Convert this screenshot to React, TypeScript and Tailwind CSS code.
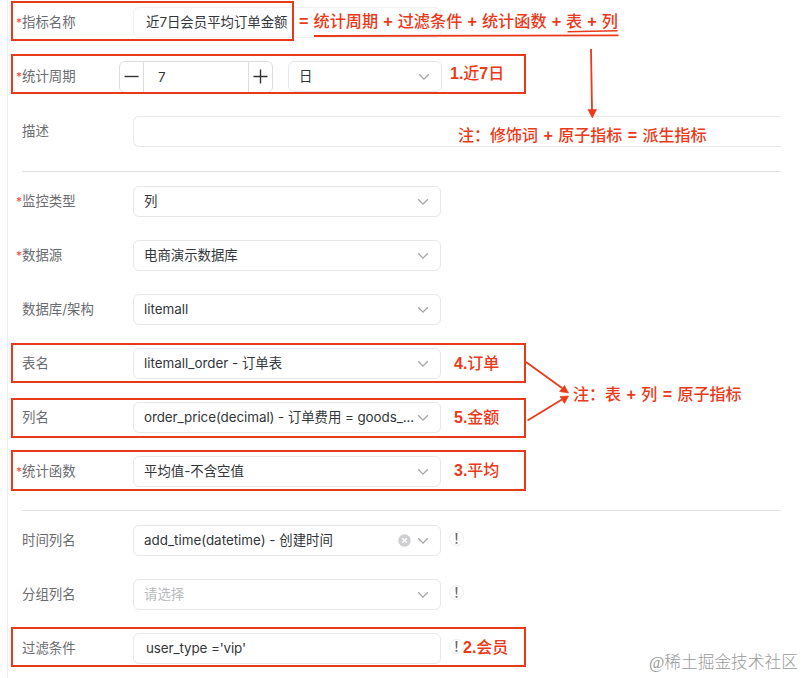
import type { ReactNode } from 'react';
import clsx from 'clsx';

interface RowProps {
  label: string;
  required?: boolean;
  mark?: string;
  className?: string;
  children: ReactNode;
}

function Row({ label, required, mark, className, children }: RowProps) {
  return (
    <div className={clsx('relative flex h-[31px] items-center', className)}>
      <div className="flex w-[117px] shrink-0 items-center text-[13.4px] text-[#6b6c6f]">
        <span className="w-[6px] shrink-0 text-[12px] leading-[14px] pt-[2px] text-[#f0483e]">{required ? '*' : ''}</span>
        <span className="whitespace-nowrap">{label}</span>
      </div>
      {children}
      {mark && <div className={clsx('absolute left-[-5px] border-2 border-[#e83a1a]', mark)} />}
    </div>
  );
}

function Chevron() {
  return (
    <svg width="12" height="8" viewBox="0 0 12 8" fill="none" className="shrink-0">
      <path d="M1.2 1.3 L6 6.1 L10.8 1.3" stroke="#a3a5a9" strokeWidth="1.3" />
    </svg>
  );
}

function ClearIcon() {
  return (
    <svg width="13" height="13" viewBox="0 0 13 13" className="mr-[6px] shrink-0">
      <circle cx="6.5" cy="6.5" r="6.2" fill="#cfcfd1" />
      <path d="M4.2 4.2 L8.8 8.8 M8.8 4.2 L4.2 8.8" stroke="#fff" strokeWidth="1.3" />
    </svg>
  );
}

interface SelectProps {
  value: string;
  placeholder?: boolean;
  clearable?: boolean;
  tracking?: string;
  className?: string;
}

function Select({ value, placeholder, clearable, tracking, className = 'w-[308px]' }: SelectProps) {
  return (
    <div
      className={clsx(
        'flex h-[31px] shrink-0 items-center rounded-[6px] border border-[#e6e7ea] pr-[11px] pl-[10px] text-[13.4px]',
        className,
      )}
    >
      <span
        className={clsx('flex-1 whitespace-nowrap', placeholder ? 'text-[#b9babd]' : 'text-[#33363b]', tracking)}
      >
        {value}
      </span>
      {clearable && <ClearIcon />}
      <Chevron />
    </div>
  );
}

function Hint() {
  return (
    <div className="mb-[4px] ml-[8px] flex size-[15px] items-center justify-center rounded-full border border-[#ededed]">
      <svg width="3" height="11" viewBox="0 0 3 11">
        <path d="M0.5 0 H2.5 L2.1 7.5 H0.9 Z" fill="#6c6c6c" />
        <rect x="0.6" y="9" width="1.8" height="1.8" fill="#6c6c6c" />
      </svg>
    </div>
  );
}

// digits and operators are bold, the Chinese text is medium
function Note({ text, className }: { text: string; className: string }) {
  return (
    <span
      className={clsx(
        "absolute font-['Liberation_Sans','Noto_Sans_CJK_SC',sans-serif] leading-[20px] font-medium whitespace-nowrap text-[#ea3a1a]",
        className,
      )}
    >
      {text.split(/([\d.+=]+)/).map((part, i) =>
        i % 2 ? (
          <span key={i} className="font-bold">
            {part}
          </span>
        ) : (
          part
        ),
      )}
    </span>
  );
}

export default function App() {
  return (
    <div className="relative h-[678px] w-[805px] overflow-hidden bg-white font-['Inter','Noto_Sans_CJK_SC',sans-serif]">
      <div className="ml-[7px] flex h-full flex-col gap-[23px] border-l border-[#efefef] pt-[7px] pr-[24px] pl-[8px]">
        <Row label="指标名称" required mark="top-[-6px] h-[40px] w-[283px]">
          <div className="flex h-[31px] w-[308px] items-center rounded-[6px] border border-[#f1f1f2] pl-[12px] text-[13.4px] text-[#33363b]">
            近7日会员平均订单金额
          </div>
        </Row>

        <Row label="统计周期" required mark="top-[-7px] h-[40px] w-[515px]">
          <div className="-ml-[14px] flex h-[32px] w-[154px] shrink-0 items-stretch rounded-[6px] border border-[#dcdde0] text-[13.4px] text-[#33363b]">
            <div className="flex w-[24px] items-center justify-center border-r border-[#dcdde0]">
              <svg width="15" height="15" viewBox="0 0 15 15">
                <path d="M0.5 7.5 H14.5" stroke="#333" strokeWidth="1.4" />
              </svg>
            </div>
            <div className="flex flex-1 items-center pt-px pl-[14px]">7</div>
            <div className="flex w-[24px] items-center justify-center border-l border-[#dcdde0]">
              <svg width="15" height="15" viewBox="0 0 15 15">
                <path d="M0.5 7.5 H14.5 M7.5 0.5 V14.5" stroke="#333" strokeWidth="1.4" />
              </svg>
            </div>
          </div>
          <Select value="日" className="ml-[15px] w-[154px]" />
        </Row>

        <Row label="描述" className="mt-px">
          <div className="h-[31px] flex-1 rounded-l-[6px] border-y border-l border-[#e8e8ea]" />
        </Row>

        <div className="mt-px ml-[6px] h-px shrink-0 bg-[#e2e2e4]" />

        <Row label="监控类型" required className="-mt-[9px]">
          <Select value="列" />
        </Row>
        <Row label="数据源" required>
          <Select value="电商演示数据库" />
        </Row>
        <Row label="数据库/架构">
          <Select value="litemall" />
        </Row>
        <Row label="表名" mark="top-[-5px] h-[40px] w-[515px]">
          <Select value="litemall_order - 订单表" />
        </Row>
        <Row label="列名" mark="top-[-4px] h-[40px] w-[515px]">
          <Select value="order_price(decimal) - 订单费用 = goods_..." tracking="tracking-[-0.06px]" />
        </Row>
        <Row label="统计函数" required mark="top-[-6px] h-[41px] w-[515px]">
          <Select value="平均值-不含空值" />
        </Row>

        <div className="ml-[6px] h-px shrink-0 bg-[#e2e2e4]" />

        <Row label="时间列名" className="-mt-[9px]">
          <Select value="add_time(datetime) - 创建时间" clearable />
          <Hint />
        </Row>
        <Row label="分组列名">
          <Select value="请选择" placeholder />
          <Hint />
        </Row>
        <Row label="过滤条件" mark="top-[-6px] h-[40px] w-[515px]">
          <div className="flex h-[31px] w-[308px] items-center rounded-[6px] border border-[#e8e8ea] pl-[12px] text-[13.4px] tracking-[-0.1px] text-[#33363b]">
            user_type ='vip'
          </div>
          <Hint />
        </Row>
      </div>

      {/* red annotations over the form */}
      <Note
        className="top-[11px] left-[299px] text-[16.2px] [word-spacing:0.5px]"
        text="= 统计周期 + 过滤条件 + 统计函数 + 表 + 列"
      />
      <Note className="top-[64px] left-[450px] text-[16px]" text="1.近7日" />
      <Note className="top-[126px] left-[458px] text-[16px] [word-spacing:1px]" text="注：修饰词 + 原子指标 = 派生指标" />
      <Note className="top-[354px] left-[454px] text-[16px]" text="4.订单" />
      <Note className="top-[408px] left-[454px] text-[16px]" text="5.金额" />
      <Note className="top-[461px] left-[454px] text-[16px]" text="3.平均" />
      <Note className="top-[385px] left-[573px] text-[16px] [word-spacing:1px]" text="注：表 + 列 = 原子指标" />
      <Note className="top-[638px] left-[463px] text-[16px]" text="2.会员" />

      <svg width="805" height="678" className="pointer-events-none absolute inset-0" stroke="#ea3a1a" fill="#ea3a1a">
        <path d="M314 36 L618.5 35.3" strokeWidth="1.8" />
        <path d="M567.5 31.7 L617.5 30.7" strokeWidth="1.6" />
        <path d="M591 49 L592 110" strokeWidth="1.8" />
        <path d="M588 109.5 H596.5 L592.3 118 Z" strokeWidth="0.6" />
        <path d="M526 362 L562 388" strokeWidth="1.8" />
        <path d="M568.5 393 L559.5 391.5 L564.5 385.5 Z" strokeWidth="0.6" />
        <path d="M527.5 420.5 L562 399.5" strokeWidth="1.8" />
        <path d="M568.5 396 L560 396.5 L564.5 403.5 Z" strokeWidth="0.6" />
      </svg>

      <span className="absolute top-[651px] left-[649px] font-['Liberation_Serif','Noto_Sans_CJK_SC',serif] text-[16.7px] leading-[24px] font-light whitespace-nowrap text-[#9a9a9a]">
        @稀土掘金技术社区
      </span>
    </div>
  );
}
